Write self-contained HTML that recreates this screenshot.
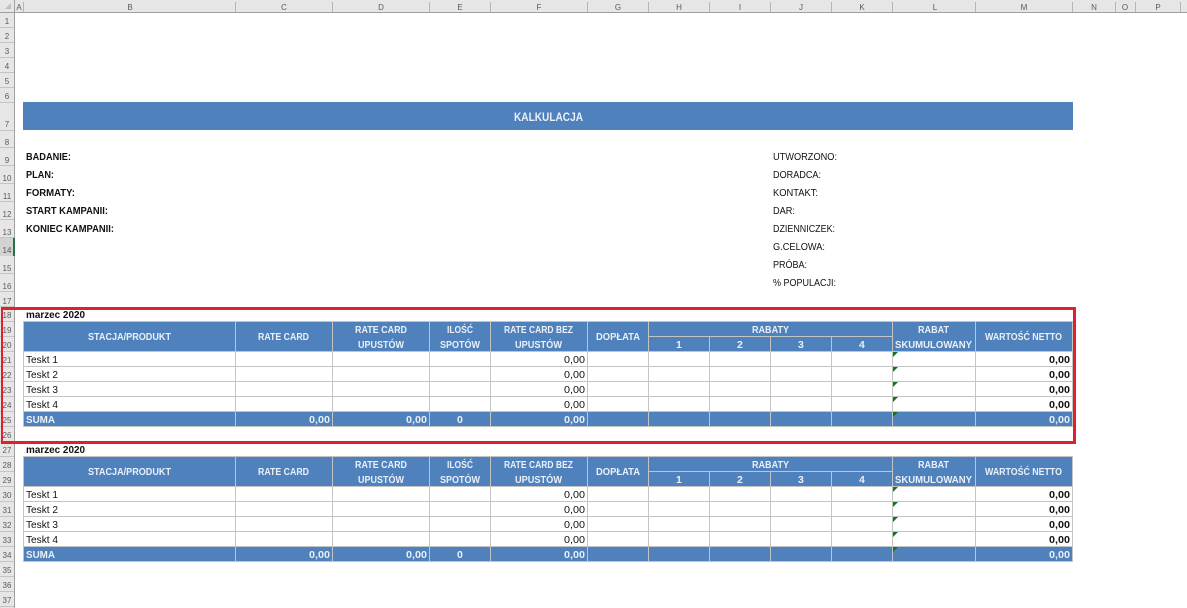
<!DOCTYPE html>
<html lang="pl"><head><meta charset="utf-8"><title>Kalkulacja</title>
<style>
html,body{margin:0;padding:0;background:#fff;width:1187px;height:608px;overflow:hidden}
svg{display:block;font-family:"Liberation Sans",sans-serif;filter:blur(.35px)}
.h{font-size:8px;fill:#5a5a5a;text-anchor:middle}
.b{font-size:10.5px;font-weight:bold;fill:#111}
.t{font-size:10.5px;fill:#111}
.w{font-size:10.5px;font-weight:bold;fill:#eaf0f8}
</style></head><body>
<svg width="1187" height="608" viewBox="0 0 1187 608" xmlns="http://www.w3.org/2000/svg">
<rect width="1187" height="608" fill="#fff"/>
<g shape-rendering="crispEdges">
<rect width="1187" height="12" fill="#e6e6e6"/>
<rect width="14" height="608" fill="#e6e6e6"/>
<rect y="12" width="1187" height="1" fill="#a0a0a0"/>
<rect x="14" width="1" height="608" fill="#a0a0a0"/>
<path fill="#b4b4b4" d="M23 2h1v10h-1zM235 2h1v10h-1zM332 2h1v10h-1zM429 2h1v10h-1zM490 2h1v10h-1zM587 2h1v10h-1zM648 2h1v10h-1zM709 2h1v10h-1zM770 2h1v10h-1zM831 2h1v10h-1zM892 2h1v10h-1zM975 2h1v10h-1zM1072 2h1v10h-1zM1115 2h1v10h-1zM1135 2h1v10h-1zM1180 2h1v10h-1z"/>
<path fill="#c4c4c4" d="M0 27h14v1H0zM0 42h14v1H0zM0 57h14v1H0zM0 72h14v1H0zM0 87h14v1H0zM0 102h14v1H0zM0 130h14v1H0zM0 147h14v1H0zM0 165h14v1H0zM0 183h14v1H0zM0 201h14v1H0zM0 219h14v1H0zM0 237h14v1H0zM0 255h14v1H0zM0 273h14v1H0zM0 291h14v1H0zM0 306h14v1H0zM0 321h14v1H0zM0 336h14v1H0zM0 351h14v1H0zM0 366h14v1H0zM0 381h14v1H0zM0 396h14v1H0zM0 411h14v1H0zM0 426h14v1H0zM0 441h14v1H0zM0 456h14v1H0zM0 471h14v1H0zM0 486h14v1H0zM0 501h14v1H0zM0 516h14v1H0zM0 531h14v1H0zM0 546h14v1H0zM0 561h14v1H0zM0 576h14v1H0zM0 591h14v1H0zM0 606h14v1H0z"/>
<rect y="238" width="14" height="18" fill="#d2d2d2"/>
<rect x="13" y="238" width="2" height="18" fill="#217346"/>
</g>
<path d="M11 3v6H5z" fill="#c0c0c0"/>
<g>
<text class="h" x="19" y="10">A</text><text class="h" x="130" y="10">B</text><text class="h" x="284" y="10">C</text><text class="h" x="381" y="10">D</text><text class="h" x="460" y="10">E</text><text class="h" x="539" y="10">F</text><text class="h" x="618" y="10">G</text><text class="h" x="679" y="10">H</text><text class="h" x="740" y="10">I</text><text class="h" x="801" y="10">J</text><text class="h" x="862" y="10">K</text><text class="h" x="935" y="10">L</text><text class="h" x="1024" y="10">M</text><text class="h" x="1094" y="10">N</text><text class="h" x="1125" y="10">O</text><text class="h" x="1158" y="10">P</text>
<text class="h" x="7" y="24">1</text><text class="h" x="7" y="39">2</text><text class="h" x="7" y="54">3</text><text class="h" x="7" y="69">4</text><text class="h" x="7" y="84">5</text><text class="h" x="7" y="99">6</text><text class="h" x="7" y="127">7</text><text class="h" x="7" y="145">8</text><text class="h" x="7" y="163">9</text><text class="h" x="7" y="181">10</text><text class="h" x="7" y="199">11</text><text class="h" x="7" y="217">12</text><text class="h" x="7" y="235">13</text><text class="h" x="7" y="253">14</text><text class="h" x="7" y="271">15</text><text class="h" x="7" y="289">16</text><text class="h" x="7" y="304">17</text><text class="h" x="7" y="318">18</text><text class="h" x="7" y="333">19</text><text class="h" x="7" y="348">20</text><text class="h" x="7" y="363">21</text><text class="h" x="7" y="378">22</text><text class="h" x="7" y="393">23</text><text class="h" x="7" y="408">24</text><text class="h" x="7" y="423">25</text><text class="h" x="7" y="438">26</text><text class="h" x="7" y="453">27</text><text class="h" x="7" y="468">28</text><text class="h" x="7" y="483">29</text><text class="h" x="7" y="498">30</text><text class="h" x="7" y="513">31</text><text class="h" x="7" y="528">32</text><text class="h" x="7" y="543">33</text><text class="h" x="7" y="558">34</text><text class="h" x="7" y="573">35</text><text class="h" x="7" y="588">36</text><text class="h" x="7" y="603">37</text>
</g>
<rect x="23" y="102" width="1050" height="28" fill="#4f81bd" shape-rendering="crispEdges"/>
<text x="514" y="121" textLength="69" lengthAdjust="spacingAndGlyphs" style="font-size:12px;font-weight:bold;fill:#eaf0f8">KALKULACJA</text>
<text class="b" x="26" y="160" textLength="45" lengthAdjust="spacingAndGlyphs">BADANIE:</text>
<text class="b" x="26" y="178" textLength="28" lengthAdjust="spacingAndGlyphs">PLAN:</text>
<text class="b" x="26" y="196" textLength="49" lengthAdjust="spacingAndGlyphs">FORMATY:</text>
<text class="b" x="26" y="214" textLength="82" lengthAdjust="spacingAndGlyphs">START KAMPANII:</text>
<text class="b" x="26" y="232" textLength="88" lengthAdjust="spacingAndGlyphs">KONIEC KAMPANII:</text>
<text class="t" x="773" y="160" textLength="64" lengthAdjust="spacingAndGlyphs">UTWORZONO:</text>
<text class="t" x="773" y="178" textLength="48" lengthAdjust="spacingAndGlyphs">DORADCA:</text>
<text class="t" x="773" y="196" textLength="45" lengthAdjust="spacingAndGlyphs">KONTAKT:</text>
<text class="t" x="773" y="214" textLength="22" lengthAdjust="spacingAndGlyphs">DAR:</text>
<text class="t" x="773" y="232" textLength="62" lengthAdjust="spacingAndGlyphs">DZIENNICZEK:</text>
<text class="t" x="773" y="250" textLength="52" lengthAdjust="spacingAndGlyphs">G.CELOWA:</text>
<text class="t" x="773" y="268" textLength="34" lengthAdjust="spacingAndGlyphs">PRÓBA:</text>
<text class="t" x="773" y="286" textLength="63" lengthAdjust="spacingAndGlyphs">% POPULACJI:</text>

<g>
<g shape-rendering="crispEdges">
<rect x="23" y="321" width="1050" height="31" fill="#4f81bd"/>
<rect x="23" y="411" width="1050" height="16" fill="#4f81bd"/>
<path fill="#c4c4c4" d="M23 321h1050v1H23zM23 351h1050v1H23zM23 366h1050v1H23zM23 381h1050v1H23zM23 396h1050v1H23zM23 411h1050v1H23zM23 426h1050v1H23zM648 336h245v1H648zM23 321h1v106h-1zM235 321h1v106h-1zM332 321h1v106h-1zM429 321h1v106h-1zM490 321h1v106h-1zM587 321h1v106h-1zM648 321h1v106h-1zM709 336h1v91h-1zM770 336h1v91h-1zM831 336h1v91h-1zM892 321h1v106h-1zM975 321h1v106h-1zM1072 321h1v106h-1z"/>
</g>
<path fill="#0b7a1c" d="M893 352h5l-5 5zM893 367h5l-5 5zM893 382h5l-5 5zM893 397h5l-5 5zM893 412h5l-5 5z"/>
<text class="b" x="26" y="318" textLength="59" lengthAdjust="spacingAndGlyphs">marzec 2020</text>
<text class="w" x="88" y="340" textLength="83" lengthAdjust="spacingAndGlyphs">STACJA/PRODUKT</text>
<text class="w" x="258" y="340" textLength="51" lengthAdjust="spacingAndGlyphs">RATE CARD</text>
<text class="w" x="355" y="333" textLength="52" lengthAdjust="spacingAndGlyphs">RATE CARD</text>
<text class="w" x="358" y="348" textLength="46" lengthAdjust="spacingAndGlyphs">UPUSTÓW</text>
<text class="w" x="447" y="333" textLength="26" lengthAdjust="spacingAndGlyphs">ILOŚĆ</text>
<text class="w" x="440" y="348" textLength="40" lengthAdjust="spacingAndGlyphs">SPOTÓW</text>
<text class="w" x="504" y="333" textLength="69" lengthAdjust="spacingAndGlyphs">RATE CARD BEZ</text>
<text class="w" x="515" y="348" textLength="47" lengthAdjust="spacingAndGlyphs">UPUSTÓW</text>
<text class="w" x="596" y="340" textLength="44" lengthAdjust="spacingAndGlyphs">DOPŁATA</text>
<text class="w" x="752" y="333" textLength="37" lengthAdjust="spacingAndGlyphs">RABATY</text>
<text class="w" x="676" y="348">1</text><text class="w" x="737" y="348">2</text><text class="w" x="798" y="348">3</text><text class="w" x="859" y="348">4</text>
<text class="w" x="918" y="333" textLength="31" lengthAdjust="spacingAndGlyphs">RABAT</text>
<text class="w" x="895" y="348" textLength="77" lengthAdjust="spacingAndGlyphs">SKUMULOWANY</text>
<text class="w" x="985" y="340" textLength="77" lengthAdjust="spacingAndGlyphs">WARTOŚĆ NETTO</text>
<text class="t" x="26" y="363" textLength="32" lengthAdjust="spacingAndGlyphs">Teskt 1</text>
<text class="t" x="26" y="378" textLength="32" lengthAdjust="spacingAndGlyphs">Teskt 2</text>
<text class="t" x="26" y="393" textLength="32" lengthAdjust="spacingAndGlyphs">Teskt 3</text>
<text class="t" x="26" y="408" textLength="32" lengthAdjust="spacingAndGlyphs">Teskt 4</text>
<text class="t" x="564" y="363" textLength="21" lengthAdjust="spacingAndGlyphs">0,00</text>
<text class="t" x="564" y="378" textLength="21" lengthAdjust="spacingAndGlyphs">0,00</text>
<text class="t" x="564" y="393" textLength="21" lengthAdjust="spacingAndGlyphs">0,00</text>
<text class="t" x="564" y="408" textLength="21" lengthAdjust="spacingAndGlyphs">0,00</text>
<text class="b" x="1049" y="363" textLength="21" lengthAdjust="spacingAndGlyphs">0,00</text>
<text class="b" x="1049" y="378" textLength="21" lengthAdjust="spacingAndGlyphs">0,00</text>
<text class="b" x="1049" y="393" textLength="21" lengthAdjust="spacingAndGlyphs">0,00</text>
<text class="b" x="1049" y="408" textLength="21" lengthAdjust="spacingAndGlyphs">0,00</text>
<text class="w" x="26" y="423" textLength="29" lengthAdjust="spacingAndGlyphs">SUMA</text>
<text class="w" x="309" y="423" textLength="21" lengthAdjust="spacingAndGlyphs">0,00</text>
<text class="w" x="406" y="423" textLength="21" lengthAdjust="spacingAndGlyphs">0,00</text>
<text class="w" x="457" y="423">0</text>
<text class="w" x="564" y="423" textLength="21" lengthAdjust="spacingAndGlyphs">0,00</text>
<text class="w" x="1049" y="423" textLength="21" lengthAdjust="spacingAndGlyphs">0,00</text>
</g>

<g transform="translate(0,135)">
<g shape-rendering="crispEdges">
<rect x="23" y="321" width="1050" height="31" fill="#4f81bd"/>
<rect x="23" y="411" width="1050" height="16" fill="#4f81bd"/>
<path fill="#c4c4c4" d="M23 321h1050v1H23zM23 351h1050v1H23zM23 366h1050v1H23zM23 381h1050v1H23zM23 396h1050v1H23zM23 411h1050v1H23zM23 426h1050v1H23zM648 336h245v1H648zM23 321h1v106h-1zM235 321h1v106h-1zM332 321h1v106h-1zM429 321h1v106h-1zM490 321h1v106h-1zM587 321h1v106h-1zM648 321h1v106h-1zM709 336h1v91h-1zM770 336h1v91h-1zM831 336h1v91h-1zM892 321h1v106h-1zM975 321h1v106h-1zM1072 321h1v106h-1z"/>
</g>
<path fill="#0b7a1c" d="M893 352h5l-5 5zM893 367h5l-5 5zM893 382h5l-5 5zM893 397h5l-5 5zM893 412h5l-5 5z"/>
<text class="b" x="26" y="318" textLength="59" lengthAdjust="spacingAndGlyphs">marzec 2020</text>
<text class="w" x="88" y="340" textLength="83" lengthAdjust="spacingAndGlyphs">STACJA/PRODUKT</text>
<text class="w" x="258" y="340" textLength="51" lengthAdjust="spacingAndGlyphs">RATE CARD</text>
<text class="w" x="355" y="333" textLength="52" lengthAdjust="spacingAndGlyphs">RATE CARD</text>
<text class="w" x="358" y="348" textLength="46" lengthAdjust="spacingAndGlyphs">UPUSTÓW</text>
<text class="w" x="447" y="333" textLength="26" lengthAdjust="spacingAndGlyphs">ILOŚĆ</text>
<text class="w" x="440" y="348" textLength="40" lengthAdjust="spacingAndGlyphs">SPOTÓW</text>
<text class="w" x="504" y="333" textLength="69" lengthAdjust="spacingAndGlyphs">RATE CARD BEZ</text>
<text class="w" x="515" y="348" textLength="47" lengthAdjust="spacingAndGlyphs">UPUSTÓW</text>
<text class="w" x="596" y="340" textLength="44" lengthAdjust="spacingAndGlyphs">DOPŁATA</text>
<text class="w" x="752" y="333" textLength="37" lengthAdjust="spacingAndGlyphs">RABATY</text>
<text class="w" x="676" y="348">1</text><text class="w" x="737" y="348">2</text><text class="w" x="798" y="348">3</text><text class="w" x="859" y="348">4</text>
<text class="w" x="918" y="333" textLength="31" lengthAdjust="spacingAndGlyphs">RABAT</text>
<text class="w" x="895" y="348" textLength="77" lengthAdjust="spacingAndGlyphs">SKUMULOWANY</text>
<text class="w" x="985" y="340" textLength="77" lengthAdjust="spacingAndGlyphs">WARTOŚĆ NETTO</text>
<text class="t" x="26" y="363" textLength="32" lengthAdjust="spacingAndGlyphs">Teskt 1</text>
<text class="t" x="26" y="378" textLength="32" lengthAdjust="spacingAndGlyphs">Teskt 2</text>
<text class="t" x="26" y="393" textLength="32" lengthAdjust="spacingAndGlyphs">Teskt 3</text>
<text class="t" x="26" y="408" textLength="32" lengthAdjust="spacingAndGlyphs">Teskt 4</text>
<text class="t" x="564" y="363" textLength="21" lengthAdjust="spacingAndGlyphs">0,00</text>
<text class="t" x="564" y="378" textLength="21" lengthAdjust="spacingAndGlyphs">0,00</text>
<text class="t" x="564" y="393" textLength="21" lengthAdjust="spacingAndGlyphs">0,00</text>
<text class="t" x="564" y="408" textLength="21" lengthAdjust="spacingAndGlyphs">0,00</text>
<text class="b" x="1049" y="363" textLength="21" lengthAdjust="spacingAndGlyphs">0,00</text>
<text class="b" x="1049" y="378" textLength="21" lengthAdjust="spacingAndGlyphs">0,00</text>
<text class="b" x="1049" y="393" textLength="21" lengthAdjust="spacingAndGlyphs">0,00</text>
<text class="b" x="1049" y="408" textLength="21" lengthAdjust="spacingAndGlyphs">0,00</text>
<text class="w" x="26" y="423" textLength="29" lengthAdjust="spacingAndGlyphs">SUMA</text>
<text class="w" x="309" y="423" textLength="21" lengthAdjust="spacingAndGlyphs">0,00</text>
<text class="w" x="406" y="423" textLength="21" lengthAdjust="spacingAndGlyphs">0,00</text>
<text class="w" x="457" y="423">0</text>
<text class="w" x="564" y="423" textLength="21" lengthAdjust="spacingAndGlyphs">0,00</text>
<text class="w" x="1049" y="423" textLength="21" lengthAdjust="spacingAndGlyphs">0,00</text>
</g>

<path fill="#e0202c" shape-rendering="crispEdges" d="M1 307h1075v137H1zM3 310v131h1070V310z" fill-rule="evenodd"/>
</svg>
</body></html>
